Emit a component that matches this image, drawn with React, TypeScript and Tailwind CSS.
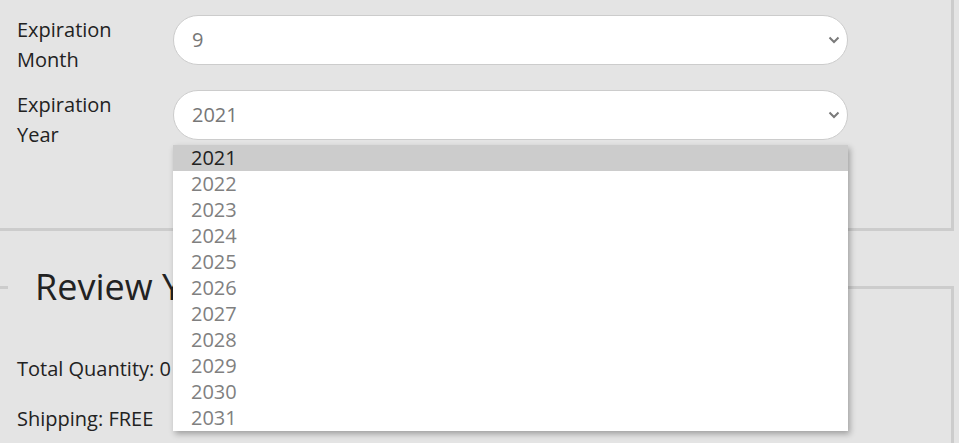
import React from 'react';

const years = ['2021', '2022', '2023', '2024', '2025', '2026', '2027', '2028', '2029', '2030', '2031'];

function Chevron() {
  return (
    <svg width="12" height="8" viewBox="0 0 12 8" className="absolute right-[7px] top-1/2 -translate-y-1/2">
      <path d="M1.5 1.5 L6 6 L10.5 1.5" fill="none" stroke="#7a7a7a" strokeWidth="2" />
    </svg>
  );
}

function SelectRow({ label, value }: { label: string[]; value: string }) {
  return (
    <div className="flex mb-[15px]">
      <div className="w-[173px] shrink-0 pl-[17px] text-[20px] leading-[30px] text-[#222]">
        {label.map((l) => (
          <div key={l}>{l}</div>
        ))}
      </div>
      <div className="relative w-[675px] h-[50px] bg-white border border-[#cccccc] rounded-full flex items-center pl-[18px] text-[20px] text-[#777]">
        {value}
        <Chevron />
      </div>
    </div>
  );
}

export default function App() {
  return (
    <div
      className="relative min-h-screen bg-[#e4e4e4] overflow-hidden"
      style={{ fontFamily: '"Open Sans", "Noto Sans", sans-serif' }}
    >
      {/* Payment section */}
      <div className="w-[954px] h-[231px] pt-[15px] border-r-[3px] border-b-[3px] border-[#cccccc]">
        <SelectRow label={['Expiration', 'Month']} value="9" />
        <SelectRow label={['Expiration', 'Year']} value="2021" />
      </div>

      {/* Review section */}
      <fieldset className="w-[954px] mt-[32px] border-t-[3px] border-r-[3px] border-[#cccccc] pb-6">
        <legend className="ml-[8px] px-[27px] text-[36px] leading-[48px] text-[#222]">Review Your Order</legend>
        <div className="pl-[17px] text-[20px] text-[#222]">
          <div className="mt-[43px] leading-[30px]">Total Quantity: 0</div>
          <div className="mt-[20px] leading-[30px]">Shipping: FREE</div>
        </div>
      </fieldset>

      {/* Open year dropdown */}
      <div className="absolute left-[173px] top-[145px] w-[675px] bg-white shadow-[2px_3px_6px_rgba(0,0,0,0.3)]">
        {years.map((y, i) => (
          <div
            key={y}
            className={
              i === 0
                ? 'h-[26px] leading-[26px] pl-[18px] text-[20px] bg-[#cccccc] text-[#222]'
                : 'h-[26px] leading-[26px] pl-[18px] text-[20px] text-[#808080]'
            }
          >
            {y}
          </div>
        ))}
      </div>
    </div>
  );
}
